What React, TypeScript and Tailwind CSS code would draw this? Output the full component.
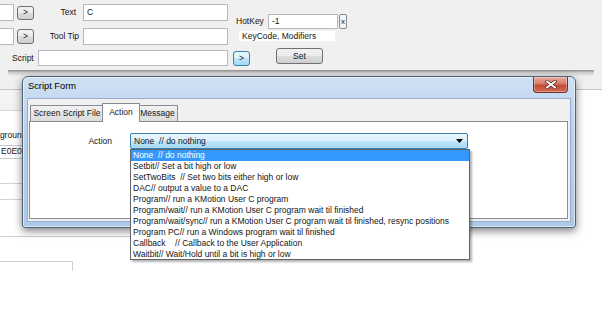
import React from 'react';

const ITEMS = [
  'None  // do nothing',
  'Setbit// Set a bit high or low',
  'SetTwoBits  // Set two bits either high or low',
  'DAC// output a value to a DAC',
  'Program// run a KMotion User C program',
  'Program/wait// run a KMotion User C program wait til finished',
  'Program/wait/sync// run a KMotion User C program wait til finished, resync positions',
  'Program PC// run a Windows program wait til finished',
  'Callback    // Callback to the User Application',
  'Waitbit// Wait/Hold until a bit is high or low',
];

const btnCls =
  'shrink-0 flex items-center justify-center border border-[#707070] rounded-[3px] bg-[linear-gradient(#f2f2f2_0%,#ebebeb_50%,#dddddd_50%,#cfcfcf_100%)]';
const hotBtnCls =
  'shrink-0 flex items-center justify-center border border-[#3c7fb1] rounded-[3px] bg-[linear-gradient(#eaf6fd_0%,#d9f0fc_50%,#bee6fd_50%,#a7d9f5_100%)]';
const boxCls = 'shrink-0 flex items-center bg-white border border-[#b4b8c0] pl-[3px]';

const CloseButton: React.FC = () => (
  <div className="mr-[7px] w-[35px] h-[16px] flex items-center justify-center rounded-b-[4px] border border-t-0 border-[#7a2c22] bg-[linear-gradient(#e9ab9c_0%,#d77a66_45%,#c24a36_55%,#cf6a52_100%)] shadow-[inset_0_0_0_1px_rgba(255,255,255,0.35)]">
    <svg width="12" height="9" viewBox="0 0 12 9">
      <path d="M2 1.5 L10 7.5 M10 1.5 L2 7.5" stroke="#5a2a22" strokeWidth="3.4" strokeLinecap="square" />
      <path d="M2 1.5 L10 7.5 M10 1.5 L2 7.5" stroke="#ffffff" strokeWidth="1.8" strokeLinecap="square" />
    </svg>
  </div>
);

const App: React.FC = () => {
  return (
    <div className="relative w-[602px] h-[321px] overflow-hidden bg-white flex flex-col text-[8.5px] leading-none text-[#151515] font-['Liberation_Sans',Arial,sans-serif]">
      {/* form behind the dialog */}
      <div className="h-[70px] shrink-0 bg-[#f0f0f0] flex pt-[4px]">
        <div className="w-[236px] shrink-0 flex flex-col">
          <div className="flex items-center h-[17px]">
            <div className={`${boxCls} w-[14px] h-[17px] border-l-0`} />
            <div className={`${btnCls} ml-[3px] w-[17px] h-[14px]`}>&gt;</div>
            <span className="w-[49px] shrink-0 pr-[7px] text-right">Text</span>
            <div className={`${boxCls} w-[145px] h-[17px]`}>C</div>
          </div>
          <div className="flex items-center h-[17px] mt-[7px]">
            <div className={`${boxCls} w-[14px] h-[17px] border-l-0`} />
            <div className={`${btnCls} ml-[3px] w-[17px] h-[15px]`}>&gt;</div>
            <span className="w-[49px] shrink-0 pr-[4px] text-right">Tool Tip</span>
            <div className={`${boxCls} w-[145px] h-[17px]`} />
          </div>
          <div className="flex items-center h-[16px] mt-[5px] pl-[12px]">
            <span className="w-[26px] shrink-0">Script</span>
            <div className={`${boxCls} w-[190px] h-[16px]`} />
            <div className={`${hotBtnCls} ml-[5px] w-[17px] h-[15px]`}>&gt;</div>
          </div>
        </div>
        <div className="flex flex-col pt-[10px]">
          <div className="flex items-center h-[15px]">
            <span className="w-[32px] shrink-0">HotKey</span>
            <div className={`${boxCls} w-[70px] h-[15px]`}>-1</div>
            <div className="ml-[1px] w-[8px] h-[15px] flex items-center justify-center border border-[#8a8a8a] rounded-[2px] bg-[#f4f4f4] text-[8px]">x</div>
          </div>
          <div className="mt-[2px] ml-[3px] w-[96px] h-[10px] bg-white pl-[3px] flex items-center">KeyCode, Modifiers</div>
          <div className={`${btnCls} mt-[7px] ml-[40px] w-[47px] h-[16px]`}>Set</div>
        </div>
      </div>
      <div className="h-[6px] shrink-0 bg-[#f0f0f0]">
        <div className="h-full mx-[8px] bg-[linear-gradient(#8c8c8c,#cfcfcf_45%,#ececec)] rounded-b-[4px]" />
      </div>

      {/* rest of the window under the dialog */}
      <div className="flex-1 flex flex-col">
        <div className="h-[14px] shrink-0 bg-[#f0f0f0] border-b border-[#c6c6c6]" />
        <div className="w-[30px] h-[21px] shrink-0 bg-[#f3f3f3] border-b border-[#d6d6d6]" />
        <div className="mt-[20px] -ml-[19px] whitespace-nowrap">Background</div>
        <div className={`${boxCls} mt-[5px] -ml-[3px] w-[60px] h-[14px] border-[#c9c9c9]`}>E0E0E0</div>
        <div className="mt-[24px] w-[120px] border-t border-[#d2d2d2]" />
        <div className="mt-[15px] w-[120px] border-t border-[#d2d2d2]" />
        <div className="mt-[36px] w-[140px] border-t border-[#cfcfcf]" />
        <div className="mt-[24px] w-[73px] h-[10px] border-t border-r border-[#cfcfcf]" />
      </div>

      {/* Script Form dialog */}
      <div className="absolute left-[22px] top-[76px] w-[554px] h-[152px] flex flex-col rounded-t-[6px] rounded-b-[3px] border border-[#4f6177] bg-[linear-gradient(180deg,#cfe0f3_0%,#b9d1ec_35%,#aec9e8_100%)] shadow-[0_3px_9px_rgba(0,0,0,0.5),inset_0_0_0_1px_rgba(255,255,255,0.55)]">
        <div className="h-[21px] shrink-0 flex items-start justify-between">
          <span className="h-[20px] pl-[5px] flex items-center text-[9.3px] text-black">Script Form</span>
          <CloseButton />
        </div>
        <div className="mx-[4px] mb-[5px] flex-1 flex flex-col border border-[#93aed0] bg-[#f0f0f0]">
          <div className="relative z-10 h-[18px] mt-[4px] pl-[2px] flex items-end">
            <div className="w-[74px] h-[16px] flex items-center justify-center border border-b-0 border-[#898c95] bg-[linear-gradient(#f2f2f2,#dcdcdc)]">
              Screen Script File
            </div>
            <div className="-mx-[2px] -mb-[1px] relative z-10 w-[38px] h-[19px] flex items-center justify-center pb-[1px] border border-b-0 border-[#898c95] bg-white">
              Action
            </div>
            <div className="w-[40px] h-[16px] flex items-center justify-center border border-b-0 border-l-0 border-[#898c95] bg-[linear-gradient(#f2f2f2,#dcdcdc)]">
              Message
            </div>
          </div>
          <div className="ml-[1px] mr-[2px] mb-[2px] flex-1 border border-[#898c95] bg-white">
            <div className="mt-[11px] flex items-center">
              <span className="w-[82px] shrink-0 text-right">Action</span>
              <div className="relative ml-[18px] w-[338px] h-[16px] shrink-0 flex items-center justify-between pl-[3px] pr-[4px] border border-[#3c7fb1] rounded-[2px] bg-[linear-gradient(#eaf6fd_0%,#d9f0fc_50%,#bee6fd_50%,#a7d9f5_100%)]">
                <span className="whitespace-pre">None  // do nothing</span>
                <svg width="7" height="4" viewBox="0 0 7 4">
                  <path d="M0 0 H7 L3.5 4 Z" fill="#000" />
                </svg>
                <div className="absolute left-[-1px] top-[15px] w-[340px] h-[111px] border border-[#646464] bg-white shadow-[2px_2px_2px_rgba(0,0,0,0.3)]">
                  {ITEMS.map((item, i) => (
                    <div
                      key={item}
                      className={
                        i === 0
                          ? 'h-[11px] flex items-center pl-[2px] whitespace-pre bg-[#3399ff] text-white'
                          : 'h-[11px] flex items-center pl-[2px] whitespace-pre'
                      }
                    >
                      {item}
                    </div>
                  ))}
                </div>
              </div>
            </div>
          </div>
        </div>
      </div>
    </div>
  );
};

export default App;
